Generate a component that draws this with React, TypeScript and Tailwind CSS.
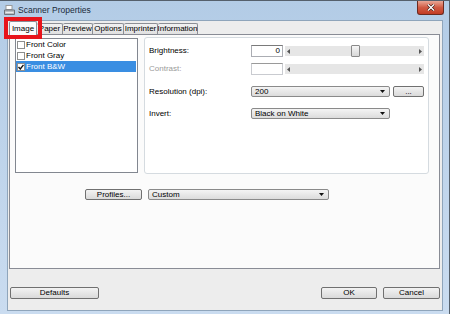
import React from 'react'

function Arrow({ dir }: { dir: 'l' | 'r' }) {
  return (
    <svg width="3" height="5" viewBox="0 0 3 5" className="shrink-0">
      {dir === 'l' ? <path d="M3 0 L0 2.5 L3 5 Z" fill="#555" /> : <path d="M0 0 L3 2.5 L0 5 Z" fill="#555" />}
    </svg>
  )
}

function Combo({ value, className }: { value: string; className: string }) {
  return (
    <div className={`flex items-center h-[11px] pl-[3px] pr-[4px] rounded-[2px] border border-[#8a8a8a] bg-gradient-to-b from-[#f4f4f4] to-[#dcdcdc] ${className}`}>
      <span className="flex-1 leading-none">{value}</span>
      <svg width="5" height="3" viewBox="0 0 5 3"><path d="M0 0 H5 L2.5 3 Z" fill="#111" /></svg>
    </div>
  )
}

function Btn({ label, className }: { label: string; className: string }) {
  return (
    <div className={`flex items-center justify-center rounded-[2px] border border-[#707070] bg-gradient-to-b from-[#f3f3f3] to-[#dadada] leading-none ${className}`}>
      {label}
    </div>
  )
}

function Slider({ disabled, thumb }: { disabled?: boolean; thumb?: boolean }) {
  return (
    <div className="flex items-center w-[139px] h-[10px] bg-[#e6e6e6] px-[2px] relative">
      <Arrow dir="l" />
      <div className="flex-1" />
      <Arrow dir="r" />
      {thumb && !disabled && (
        <div className="absolute left-[66px] top-[-1px] w-[9px] h-[12px] rounded-[1px] border border-[#8a8a8a] bg-gradient-to-b from-[#f6f6f6] to-[#d8d8d8]" />
      )}
    </div>
  )
}

function ListItem({ label, checked, selected }: { label: string; checked?: boolean; selected?: boolean }) {
  return (
    <div className={`flex items-center h-[11px] pl-[1px] w-[120px] ${selected ? 'bg-[#3a8ee2] text-white' : ''}`}>
      <div className="w-[8px] h-[8px] border border-[#8e8f8f] bg-white flex items-center justify-center mr-px">
        {checked && (
          <svg width="6" height="6" viewBox="0 0 6 6"><path d="M0.5 3 L2.3 5 L5.5 0.8" stroke="#111" strokeWidth="1.4" fill="none" /></svg>
        )}
      </div>
      <span className="leading-none">{label}</span>
    </div>
  )
}

export default function App() {
  const tabs = [
    { label: 'Image', w: 'w-[28px]' },
    { label: 'Paper', w: 'w-[26px]' },
    { label: 'Preview', w: 'w-[30px]' },
    { label: 'Options', w: 'w-[31px]' },
    { label: 'Imprinter', w: 'w-[34px]' },
    { label: 'Information', w: 'w-[40px]' },
  ]

  return (
    <div className="w-[450px] h-[314px] relative overflow-hidden bg-gradient-to-b from-[#b3cce6] to-[#cadcf0] border-t border-r border-[#55606c] font-['Liberation_Sans',Arial,sans-serif] text-[8px] text-black">
      {/* title bar */}
      <div className="h-[19px] flex items-center pl-[4px]">
        <svg width="11" height="11" viewBox="0 0 11 11" className="mr-[2px]">
          <rect x="2" y="0.5" width="6" height="4" fill="#fff" stroke="#9a9a9a" />
          <path d="M0.5 5 L10.5 5 L10.5 9.5 L0.5 9.5 Z" fill="#b8bcc2" stroke="#6f757c" />
          <rect x="1.5" y="7" width="8" height="1" fill="#e8eaec" />
        </svg>
        <span className="text-[8.5px] text-[#1b2a3a] pl-[1px]">Scanner Properties</span>
        <div className="flex-1" />
        <div className="w-[27px] h-[14px] -mt-[5px] mr-[5px] rounded-b-[3px] border border-[#6b2a20] border-t-0 bg-gradient-to-b from-[#e9a796] via-[#d05a43] to-[#c23b23] flex items-center justify-center">
          <svg width="8" height="7" viewBox="0 0 8 7">
            <path d="M1 0.5 L7 6.5 M7 0.5 L1 6.5" stroke="#3d1a14" strokeWidth="2.6" />
            <path d="M1 0.5 L7 6.5 M7 0.5 L1 6.5" stroke="#fff" strokeWidth="1.4" />
          </svg>
        </div>
      </div>

      {/* client area */}
      <div className="ml-[7px] mr-[6px] h-[291px] bg-[#ededed] border border-[#8fa5bb] flex flex-col">
        {/* tab strip */}
        <div className="h-[13px] flex items-end pl-[1px]">
          {tabs.map((t, i) =>
            i === 0 ? (
              <div key={t.label} className={`${t.w} h-[14px] -mb-px z-10 bg-[#fbfbfb] border border-b-0 border-[#898c95] rounded-t-[2px] flex items-center justify-center`}>
                {t.label}
              </div>
            ) : (
              <div key={t.label} className={`${t.w} h-[11px] bg-gradient-to-b from-[#f2f2f2] to-[#e0e0e0] border border-b-0 border-l-0 border-[#8c8e94] rounded-t-[2px] flex items-center justify-center leading-none`}>
                {t.label}
              </div>
            ),
          )}
        </div>

        {/* tab page */}
        <div className="ml-[1px] w-[431px] h-[235px] bg-[#fbfbfb] border border-[#898c95] flex flex-col">
          <div className="flex items-start pt-[2px] pl-[5px] gap-[6px]">
            <div className="mt-[1px] w-[123px] h-[135px] bg-white border border-[#828790] flex flex-col">
              <ListItem label="Front Color" />
              <ListItem label="Front Gray" />
              <ListItem label="Front B&W" checked selected />
            </div>

            <div className="w-[285px] h-[137px] bg-white border border-[#d5dbe0] rounded-[3px] pl-[4px] pt-[7px] flex flex-col">
              <div className="flex items-center h-[12px]">
                <span className="w-[102px]">Brightness:</span>
                <div className="w-[32px] h-[12px] border border-[#abadb3] border-t-[#7a7a7a] bg-white text-right pr-[2px] leading-[10px]">0</div>
                <div className="ml-[2px]"><Slider thumb /></div>
              </div>
              <div className="flex items-center h-[12px] mt-[6px]">
                <span className="w-[102px] text-[#9a9a9a]">Contrast:</span>
                <div className="w-[32px] h-[12px] border border-[#c9cbd0] border-t-[#9a9a9a] bg-white" />
                <div className="ml-[2px]"><Slider disabled /></div>
              </div>
              <div className="flex items-center h-[11px] mt-[11px]">
                <span className="w-[102px]">Resolution (dpi):</span>
                <Combo value="200" className="w-[139px]" />
                <Btn label="..." className="ml-[3px] w-[31px] h-[11px]" />
              </div>
              <div className="flex items-center h-[11px] mt-[11px]">
                <span className="w-[102px]">Invert:</span>
                <Combo value="Black on White" className="w-[139px]" />
              </div>
            </div>
          </div>

          <div className="flex items-center mt-[15px] pl-[75px] gap-[6px]">
            <Btn label="Profiles..." className="w-[57px] h-[11px]" />
            <Combo value="Custom" className="w-[181px]" />
          </div>
        </div>

        {/* bottom buttons */}
        <div className="flex items-center mt-[18px] px-[2px]">
          <Btn label="Defaults" className="w-[89px] h-[12px]" />
          <div className="flex-1" />
          <Btn label="OK" className="w-[56px] h-[12px]" />
          <Btn label="Cancel" className="ml-[6px] w-[57px] h-[12px]" />
        </div>
      </div>

      {/* red highlight around the Image tab */}
      <div className="absolute left-[4px] top-[16px] w-[38px] h-[22px] border-[4px] border-[#e8141b]" />
    </div>
  )
}
